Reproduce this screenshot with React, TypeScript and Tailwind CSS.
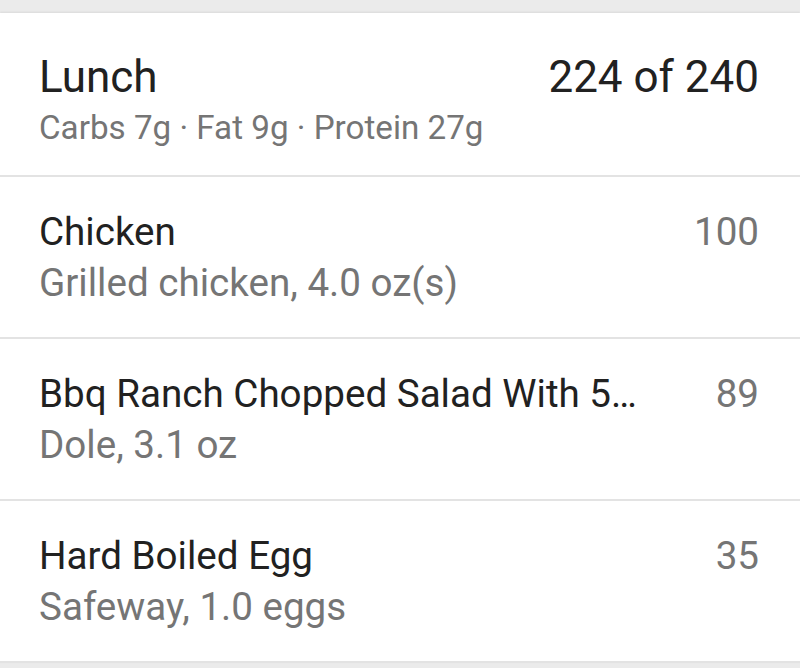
import React from "react";

const items = [
  { name: "Chicken", sub: "Grilled chicken, 4.0 oz(s)", cal: "100" },
  { name: "Bbq Ranch Chopped Salad With 5…", sub: "Dole, 3.1 oz", cal: "89" },
  { name: "Hard Boiled Egg", sub: "Safeway, 1.0 eggs", cal: "35" },
];

export default function App() {
  return (
    <div
      className="w-[800px] h-[668px] bg-[#ebebeb] overflow-hidden pt-[13px]"
      style={{ fontFamily: "Roboto, 'Noto Sans', sans-serif" }}
    >
      <div className="bg-white shadow-[0_-1px_2px_rgba(0,0,0,0.08)]">
        <div className="pl-[39px] pr-[41px] pt-[41px] pb-[24px] border-b-2 border-[#e3e3e3]">
          <div className="flex justify-between items-baseline text-[44px] leading-[46px] text-[#212121]">
            <span>Lunch</span>
            <span>224 of 240</span>
          </div>
          <div className="mt-[5px] text-[33.2px] leading-[46px] text-[#757575]">
            Carbs 7g · Fat 9g · Protein 27g
          </div>
        </div>
        {items.map((it) => (
          <div
            key={it.name}
            className="pl-[39px] pr-[41px] pt-[32px] pb-[31px] border-b-2 border-[#e3e3e3]"
          >
            <div className="flex justify-between items-baseline text-[38.6px] leading-[46px]">
              <span className="text-[#212121] whitespace-nowrap">{it.name}</span>
              <span className="text-[#757575]">{it.cal}</span>
            </div>
            <div className="mt-[5px] text-[38.6px] leading-[46px] text-[#757575]">{it.sub}</div>
          </div>
        ))}
      </div>
    </div>
  );
}
